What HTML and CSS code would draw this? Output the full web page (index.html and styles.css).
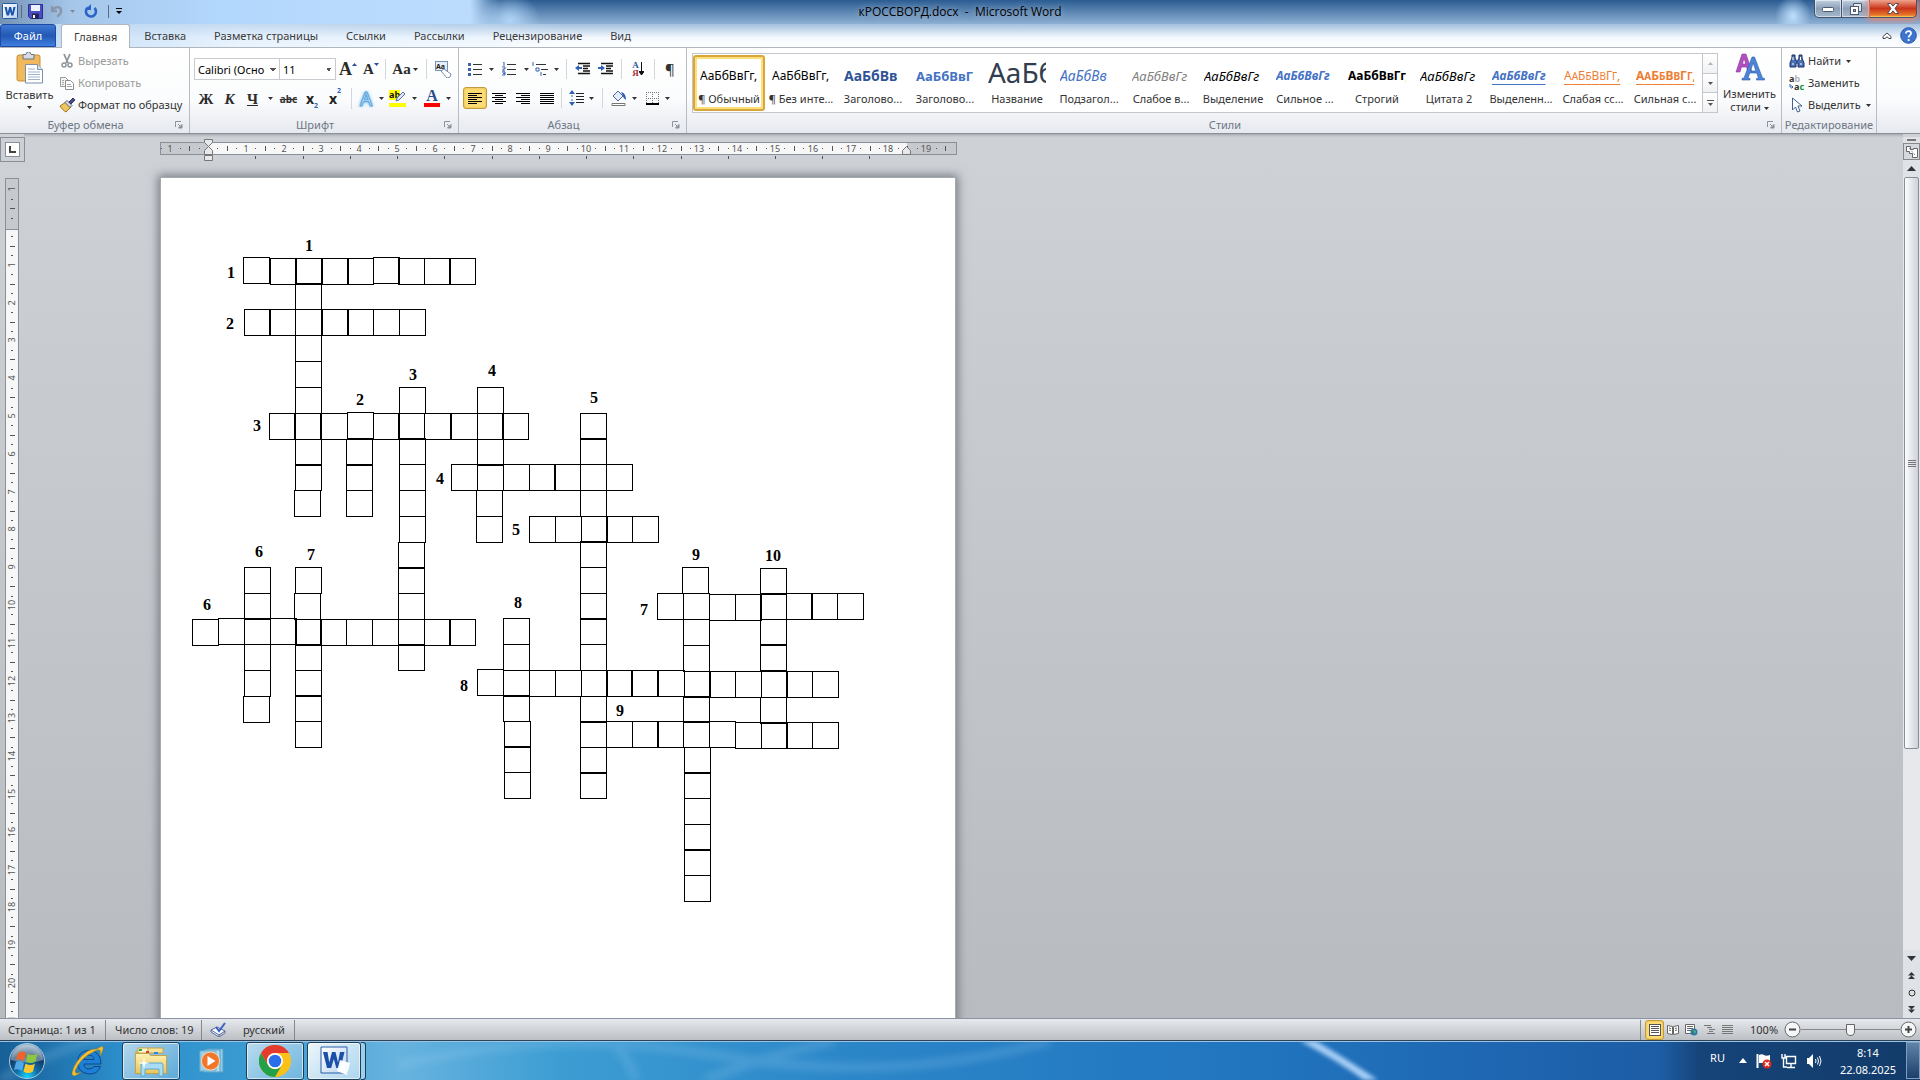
FILE: index.html
```html
<!DOCTYPE html>
<html lang="ru">
<head>
<meta charset="utf-8">
<title>кРОССВОРД.docx - Microsoft Word</title>
<link rel="stylesheet" href="styles.css">
</head>
<body>
<svg class="defs" aria-hidden="true">
  <defs>
    <linearGradient id="gFolder" x1="0" y1="0" x2="0" y2="1"><stop offset="0" stop-color="#fdf3b4"/><stop offset="1" stop-color="#e9c45c"/></linearGradient>
    <radialGradient id="gOrb" cx=".5" cy=".95" r=".9"><stop offset="0" stop-color="#19d3ff"/><stop offset=".35" stop-color="#0f6fa8"/><stop offset=".7" stop-color="#123a63"/><stop offset="1" stop-color="#8fb0c8"/></radialGradient>
    <linearGradient id="gW" x1="0" y1="0" x2="1" y2="1"><stop offset="0" stop-color="#fff"/><stop offset="1" stop-color="#b9d3f0"/></linearGradient>
    <symbol id="caret" viewBox="0 0 5 3"><path d="M0 0h5L2.500 3z" fill="currentColor"/></symbol>
    <symbol id="launch" viewBox="0 0 8 8"><path d="M.5 6V.5H6" fill="none" stroke="#8a929c"/><path d="M3 3l3 3M7 3.500V7H3.500z" stroke="#8a929c" fill="#8a929c"/></symbol>
    <symbol id="word" viewBox="0 0 16 16"><rect x=".5" y=".5" width="15" height="15" rx="1" fill="url(#gW)" stroke="#24589f"/><path d="M2.500 4h2.300l1 5.200L7.200 4h1.900l1.300 5.200 1-5.200h2.200l-2.200 8.500H9.200L8.100 8.200 7 12.500H4.700z" fill="#1b56ae"/></symbol>
    <symbol id="al" viewBox="0 0 14 12"><path d="M0 1.500h14M0 3.500h9M0 5.500h14M0 7.500h9M0 9.500h14M0 11.500h9" stroke="#000"/></symbol>
    <symbol id="ac" viewBox="0 0 14 12"><path d="M0 1.500h14M3 3.500h8M0 5.500h14M3 7.500h8M0 9.500h14M3 11.500h8" stroke="#000"/></symbol>
    <symbol id="ar" viewBox="0 0 14 12"><path d="M0 1.500h14M5 3.500h9M0 5.500h14M5 7.500h9M0 9.500h14M5 11.500h9" stroke="#000"/></symbol>
    <symbol id="aj" viewBox="0 0 14 12"><path d="M0 1.500h14M0 3.500h14M0 5.500h14M0 7.500h14M0 9.500h14M0 11.500h14" stroke="#000"/></symbol>
  </defs>
</svg>

<header class="titlebar">
  <div class="qat">
    <svg width="16" height="16"><use href="#word"/></svg>
    <i class="qsep"></i>
    <button aria-label="Сохранить"><svg width="15" height="15" viewBox="0 0 15 15"><path d="M.5 .5h14v14h-12l-2-2z" fill="#4a4fc4" stroke="#2b2f93"/><path d="M3 1h9v6H3z" fill="#eef1ff"/><path d="M4 9.500h7V15H4z" fill="#23265e"/><path d="M5 11h2v3H5z" fill="#fff"/></svg></button>
    <button aria-label="Отменить"><svg width="14" height="14" viewBox="0 0 14 14"><path d="M2 2v5h5M2.500 6.500C5 2 11 2 11 6.500c0 3-2 5-4 6" fill="none" stroke="#8996ab" stroke-width="2.400"/></svg></button>
    <svg class="qcaret" width="5" height="3"><use href="#caret"/></svg>
    <button aria-label="Повторить"><svg width="14" height="14" viewBox="0 0 14 14"><path d="M4 3.500A5 5 0 1 0 10.500 4" fill="none" stroke="#2a63c8" stroke-width="2.600"/><path d="M7 0v6H1z" fill="#2a63c8"/></svg></button>
    <i class="qsep"></i>
    <button aria-label="Настройка панели"><svg width="8" height="8" viewBox="0 0 8 8"><path d="M1 1.500h6" stroke="#000"/><path d="M1 4h6L4 7z" fill="#000"/></svg></button>
  </div>
  <h1>кРОССВОРД.docx&nbsp; -&nbsp; Microsoft Word</h1>
  <div class="winbtns">
    <button aria-label="Свернуть"><svg width="12" height="6" viewBox="0 0 12 6"><rect x=".5" y="1.500" width="11" height="4" rx="1" fill="#fff" stroke="#4d5a6e"/></svg></button>
    <button aria-label="Восстановить"><svg width="12" height="12" viewBox="0 0 12 12"><path d="M3.500 3V.5h8v8H9" fill="#dfe6ee" stroke="#4d5a6e"/><rect x=".5" y="3.500" width="8" height="8" fill="#fff" stroke="#4d5a6e"/><rect x="3.500" y="6.500" width="2" height="2" fill="#a9b8ca" stroke="#4d5a6e"/></svg></button>
    <button class="close" aria-label="Закрыть"><svg width="12" height="11" viewBox="0 0 12 11"><path d="M.5 .5h3.300L6 3.200 8.200.5h3.300L8 5.500l3.500 5H8.200L6 7.800 3.800 10.500H.5L4 5.500z" fill="#fff" stroke="#5c4a55"/></svg></button>
  </div>
</header>

<nav class="tabs">
  <button class="file">Файл</button>
  <button class="tab on">Главная</button>
  <button class="tab">Вставка</button>
  <button class="tab">Разметка страницы</button>
  <button class="tab">Ссылки</button>
  <button class="tab">Рассылки</button>
  <button class="tab">Рецензирование</button>
  <button class="tab">Вид</button>
  <span class="tabtools">
    <button aria-label="Свернуть ленту"><svg width="10" height="8" viewBox="0 0 10 8"><path d="M1 4.500L5 1l4 3.500v2H7L5 4.800 3 6.500H1z" fill="#fff" stroke="#444"/></svg></button>
    <button aria-label="Справка"><svg width="17" height="17" viewBox="0 0 17 17"><circle cx="8.500" cy="8.500" r="7.800" fill="#3e74cf" stroke="#2a57a6"/><path d="M6 6.500C6 3.200 11 3.400 11 6.400 11 8.300 8.600 8.200 8.600 10.500M8.600 12v2" fill="none" stroke="#fff" stroke-width="1.800"/></svg></button>
  </span>
</nav>

<section class="ribbon">
  <div class="group clip">
    <div class="body">
      <button class="paste"><svg width="28" height="32" viewBox="0 0 28 32"><rect x="1" y="3" width="23" height="26" rx="2" fill="#efb95c" stroke="#c98f35"/><path d="M7 2.500h3a2.500 2.500 0 0 1 5 0h3V7H7z" fill="#d8dce2" stroke="#6d7580"/><path d="M9.500 12.500h12l5 5V31h-17z" fill="#fff" stroke="#7d90ab"/><path d="M21.500 12.500v5h5" fill="#dbe6f3" stroke="#7d90ab"/><path d="M12 17h7M12 20h12M12 22.500h12M12 25h12M12 27.500h12" stroke="#9fb3cf"/></svg><span>Вставить</span><svg width="5" height="3"><use href="#caret"/></svg></button>
      <div class="col">
        <button class="dim"><svg width="16" height="16" viewBox="0 0 16 16"><path d="M5 1l4 9M11 1L7 10" stroke="#8f959c" stroke-width="1.800"/><circle cx="5" cy="12" r="2" fill="none" stroke="#8f959c" stroke-width="1.500"/><circle cx="11" cy="12" r="2" fill="none" stroke="#8f959c" stroke-width="1.500"/></svg>Вырезать</button>
        <button class="dim"><svg width="16" height="16" viewBox="0 0 16 16"><path d="M1.500 2.500h5l3 3v6h-8z" fill="#f5f5f5" stroke="#9a9a9a"/><path d="M6.500 5.500h5l3 3v6h-8z" fill="#fff" stroke="#8d8d8d"/><path d="M8 9.500h4M8 11.500h5M3 5.500h2M3 7.500h2M3 9.500h2" stroke="#a5a5a5"/></svg>Копировать</button>
        <button><svg width="16" height="16" viewBox="0 0 16 16"><path d="M1 9l6-4 5 5-5 5c-2-1-5-4-6-6z" fill="#efc659" stroke="#9c7423"/><path d="M6 5.500L8 3.500l5 5-2 2z" fill="#d9dce6" stroke="#555a77"/><path d="M10 5l4-4 2 2-4 4z" fill="#4a4d86" stroke="#33366a"/></svg>Формат по образцу</button>
      </div>
    </div>
    <footer>Буфер обмена<svg class="la" width="8" height="8"><use href="#launch"/></svg></footer>
  </div>

  <div class="group font">
    <div class="body rows">
      <div class="tr f1">
        <select aria-label="Шрифт"><option>Calibri (Осно</option></select>
        <select aria-label="Размер"><option>11</option></select>
        <button class="serif big">A<svg class="up" width="5" height="3" viewBox="0 0 5 3"><path d="M0 3h5L2.500 0z" fill="#2c4fa0"/></svg></button>
        <button class="serif">A<svg class="up" width="5" height="3" viewBox="0 0 5 3"><path d="M0 0h5L2.500 3z" fill="#2c4fa0"/></svg></button>
        <i class="sep"></i>
        <button class="serif mid">Aa<svg width="5" height="3"><use href="#caret"/></svg></button>
        <i class="sep"></i>
        <button aria-label="Очистить формат"><svg width="17" height="17" viewBox="0 0 17 17"><rect x=".5" y=".5" width="12" height="9" fill="#e8eef8" stroke="#7a8fb5"/><text x="1" y="8" class="tiny">Aa</text><path d="M6 10l3-2 7 5-1 3-3 1z" fill="#fff" stroke="#7a8fb5"/></svg></button>
      </div>
      <div class="tr f2">
        <button class="serif b">Ж</button><button class="serif b i">К</button><button class="serif b u">Ч</button>
        <button aria-label="Подчёркивание"><svg width="5" height="3"><use href="#caret"/></svg></button>
        <button class="strike">abc</button>
        <button class="xb">x<sub>2</sub></button><button class="xb">x<sup>2</sup></button>
        <i class="sep"></i>
        <button class="glow">A</button><button aria-label="Эффекты"><svg width="5" height="3"><use href="#caret"/></svg></button>
        <button aria-label="Выделение"><svg width="17" height="17" viewBox="0 0 17 17"><path d="M0 0h11v10H0zM0 13h17v4H0z" fill="#ff0"/><text x="0" y="8" class="tiny2">ab</text><path d="M7 11l1-3 6-6 2 2-6 6z" fill="#dfe6f5" stroke="#5a6fa5"/></svg></button><button aria-label="Цвет выделения"><svg width="5" height="3"><use href="#caret"/></svg></button>
        <button class="serif colorA">A</button><button aria-label="Цвет текста"><svg width="5" height="3"><use href="#caret"/></svg></button>
      </div>
    </div>
    <footer>Шрифт<svg class="la" width="8" height="8"><use href="#launch"/></svg></footer>
  </div>

  <div class="group para">
    <div class="body rows">
      <div class="tr p1">
        <button aria-label="Маркеры"><svg width="14" height="13" viewBox="0 0 14 13"><path d="M0 0h3v3H0zM0 5h3v3H0zM0 10h3v3H0z" fill="#3a62b0"/><path d="M5 1.500h9M5 6.500h9M5 11.500h9" stroke="#333"/></svg></button><button aria-label="Вид маркера"><svg width="5" height="3"><use href="#caret"/></svg></button>
        <button aria-label="Нумерация"><svg width="14" height="14" viewBox="0 0 14 14"><path d="M1 0h1v4M0 5h3v2H1v2h2M0 10h3v3H0M1 11.500h2" stroke="#3a62b0" fill="none"/><path d="M5 2.500h9M5 7.500h9M5 12.500h9" stroke="#333"/></svg></button><button aria-label="Вид номера"><svg width="5" height="3"><use href="#caret"/></svg></button>
        <button aria-label="Многоуровневый список"><svg width="16" height="15" viewBox="0 0 16 15"><path d="M1 0v4M4 6h3v3H4zM9 10v4" stroke="#3a62b0" fill="none"/><path d="M4 2.500h10M9 7.500h7M11 12.500h3" stroke="#333"/></svg></button><button aria-label="Вид списка"><svg width="5" height="3"><use href="#caret"/></svg></button>
        <i class="sep"></i>
        <button aria-label="Уменьшить отступ"><svg width="16" height="14" viewBox="0 0 16 14"><path d="M3 1.500h12M8 4h7M8 6.500h5M8 9h7M3 11.500h12" stroke="#111" stroke-width="1.300"/><path d="M0 6l4-3v2h3v2H4v2z" fill="#2f5fb8"/></svg></button>
        <button aria-label="Увеличить отступ"><svg width="16" height="14" viewBox="0 0 16 14"><path d="M3 1.500h12M8 4h7M8 6.500h5M8 9h7M3 11.500h12" stroke="#111" stroke-width="1.300"/><path d="M7 6L3 3v2H0v2h3v2z" fill="#2f5fb8"/></svg></button>
        <i class="sep"></i>
        <button class="sort"><span><b>А</b><b>Я</b></span><svg width="5" height="14" viewBox="0 0 5 14"><path d="M2.500 0v12M0 9.500L2.500 13 5 9.500z" stroke="#111"/></svg></button>
        <i class="sep"></i>
        <button class="pil">¶</button>
      </div>
      <div class="tr p2">
        <button class="sel" aria-label="По левому краю"><svg width="14" height="12"><use href="#al"/></svg></button>
        <button aria-label="По центру"><svg width="14" height="12"><use href="#ac"/></svg></button>
        <button aria-label="По правому краю"><svg width="14" height="12"><use href="#ar"/></svg></button>
        <button aria-label="По ширине"><svg width="14" height="12"><use href="#aj"/></svg></button>
        <i class="sep"></i>
        <button aria-label="Интервал"><svg width="15" height="16" viewBox="0 0 15 16"><path d="M7 3.500h8M7 6.500h8M7 9.500h8M7 12.500h8" stroke="#222"/><path d="M3 0l3 4H0zM3 16l3-4H0z" fill="#2f5fb8"/><path d="M3 5v6" stroke="#2f5fb8" stroke-dasharray="2 2"/></svg></button><button aria-label="Выбор интервала"><svg width="5" height="3"><use href="#caret"/></svg></button>
        <i class="sep"></i>
        <button aria-label="Заливка"><svg width="16" height="16" viewBox="0 0 16 16"><path d="M2 6l5-5 5 5-5 5z" fill="#e3ebf7" stroke="#4a689c"/><path d="M10 2c4 1 5 4 5 8-2-1-3-3-3-4z" fill="#2f5fb8"/><path d="M1 13.500h13v2H1z" fill="#fff" stroke="#777"/></svg></button><button aria-label="Цвет заливки"><svg width="5" height="3"><use href="#caret"/></svg></button>
        <button aria-label="Границы"><svg width="13" height="13" viewBox="0 0 13 13"><path d="M.5 0v12M6.500 0v12M12.500 0v12M0 .5h13M0 6.500h13" stroke="#777" stroke-dasharray="1 1"/><path d="M0 12h13" stroke="#000" stroke-width="2"/></svg></button><button aria-label="Вид границы"><svg width="5" height="3"><use href="#caret"/></svg></button>
      </div>
    </div>
    <footer>Абзац<svg class="la" width="8" height="8"><use href="#launch"/></svg></footer>
  </div>

  <div class="group styles">
    <div class="body">
      <div class="gallery">
        <button class="st on"><span>АаБбВвГг,</span><em>¶ Обычный</em></button>
        <button class="st"><span>АаБбВвГг,</span><em>¶ Без инте...</em></button>
        <button class="st"><span class="h1">АаБбВв</span><em>Заголово...</em></button>
        <button class="st"><span class="h2">АаБбВвГ</span><em>Заголово...</em></button>
        <button class="st"><span class="ttl">АаБб</span><em>Название</em></button>
        <button class="st"><span class="subt">АаБбВв</span><em>Подзагол...</em></button>
        <button class="st"><span class="weak">АаБбВвГг</span><em>Слабое в...</em></button>
        <button class="st"><span class="it">АаБбВвГг</span><em>Выделение</em></button>
        <button class="st"><span class="strong">АаБбВвГг</span><em>Сильное ...</em></button>
        <button class="st"><span class="bold">АаБбВвГг,</span><em>Строгий</em></button>
        <button class="st"><span class="it">АаБбВвГг</span><em>Цитата 2</em></button>
        <button class="st"><span class="strong ul">АаБбВвГг</span><em>Выделенн...</em></button>
        <button class="st"><span class="ref">А<small>А</small>Б<small>Б</small>В<small>В</small>Г<small>Г</small>,</span><em>Слабая сс...</em></button>
        <button class="st"><span class="ref bold">А<small>А</small>Б<small>Б</small>В<small>В</small>Г<small>Г</small>,</span><em>Сильная с...</em></button>
        <div class="gbtn">
          <button aria-label="Вверх" disabled><svg width="5" height="3" viewBox="0 0 5 3"><path d="M0 3h5L2.500 0z" fill="#b0b4ba"/></svg></button>
          <button aria-label="Вниз"><svg width="5" height="3"><use href="#caret"/></svg></button>
          <button aria-label="Все стили"><svg width="7" height="6" viewBox="0 0 7 6"><path d="M0 .5h7" stroke="#555"/><path d="M1 3h5L3.500 6z" fill="#555"/></svg></button>
        </div>
      </div>
      <button class="change"><svg width="30" height="28" viewBox="0 0 30 28"><path d="M1 19L7 1h4l6 18h-4l-1.500-5h-5L5 19zM7.500 11h3.200L9 5z" fill="#b24fc0" stroke="#8c379b" stroke-width=".6"/><path d="M7 27v-1.500l2-.5L17 4h2.500l8 21 2 .5V27h-8v-1.500l2-.5-1.800-5h-7l-1.700 5 2 .5V27zM15.400 18h5.500l-2.700-8z" fill="#4c85d8" stroke="#2b5ca8" stroke-width=".6"/></svg><span>Изменить<br>стили <svg width="5" height="3"><use href="#caret"/></svg></span></button>
    </div>
    <footer>Стили<svg class="la" width="8" height="8"><use href="#launch"/></svg></footer>
  </div>

  <div class="group edit">
    <div class="body">
      <div class="col">
        <button><svg width="16" height="14" viewBox="0 0 16 14"><path d="M3 1h3v3l1 2v1h2V6l1-2V1h3v3l2 5v4H9V9H7v4H1V9l2-5z" fill="#4a72b8" stroke="#1c2f63"/><path d="M3 10h2M11 10h2M4 3v3M11.500 3v3" stroke="#fff"/></svg>Найти <svg class="cr" width="5" height="3"><use href="#caret"/></svg></button>
        <button><svg width="16" height="16" viewBox="0 0 16 16"><text x="0" y="7" class="rep">a<tspan class="g">b</tspan></text><text x="5" y="15" class="rep">a<tspan class="gr">c</tspan></text><path d="M1 9v3h3M2.500 10.500L4 12l-1.500 1.500" fill="none" stroke="#2f5fb8"/></svg>Заменить</button>
        <button><svg width="16" height="16" viewBox="0 0 16 16"><path d="M3.500 1v12l3-3 2 5 2.500-1-2-5h4z" fill="#fff" stroke="#41628f"/></svg>Выделить <svg class="cr" width="5" height="3"><use href="#caret"/></svg></button>
      </div>
    </div>
    <footer>Редактирование</footer>
  </div>
</section>

<main class="work">
  <div class="corner"><button aria-label="Табуляция"><svg width="7" height="7" viewBox="0 0 7 7"><path d="M1 0v6h6" fill="none" stroke="#444" stroke-width="2"/></svg></button></div>
  <div class="hrule"><svg id="hr" width="800" height="24" viewBox="160 139 800 24"></svg></div>
  <div class="vrule"><svg id="vr" width="15" height="860" viewBox="5 177 15 860"></svg></div>
  <div class="canvas">
    <article class="page">
      <svg class="cross" viewBox="161 178 794 860" width="794" height="860"><g id="cells" fill="none" stroke="#000" stroke-width="1" shape-rendering="crispEdges"></g><g id="nums"></g></svg>
    </article>
  </div>
  <div class="vscroll">
    <i class="split"></i>
    <button class="rb" aria-label="Линейка"><svg width="12" height="12" viewBox="0 0 12 12"><path d="M.5 .5h4v3h3v-1h4v9h-5v-4h-3v-2h-3z" fill="#fff" stroke="#666"/><path d="M3 2l6 7" stroke="#666" stroke-dasharray="1 1"/></svg></button>
    <button aria-label="Вверх"><svg width="9" height="5" viewBox="0 0 9 5"><path d="M0 5h9L4.500 0z" fill="#333"/></svg></button>
    <div class="track"><div class="thumb"><svg width="8" height="7" viewBox="0 0 8 7"><path d="M0 .5h8M0 2.500h8M0 4.500h8M0 6.500h8" stroke="#777"/></svg></div></div>
    <button aria-label="Вниз"><svg width="9" height="5" viewBox="0 0 9 5"><path d="M0 0h9L4.500 5z" fill="#333"/></svg></button>
    <button aria-label="Предыдущая страница"><svg width="7" height="7" viewBox="0 0 7 7"><path d="M0 3.500h7L3.500 0zM0 7h7L3.500 3.500z" fill="#333"/></svg></button>
    <button aria-label="Объект перехода"><svg width="8" height="8" viewBox="0 0 8 8"><circle cx="4" cy="4" r="3" fill="#ddd" stroke="#333"/></svg></button>
    <button aria-label="Следующая страница"><svg width="7" height="7" viewBox="0 0 7 7"><path d="M0 0h7L3.500 3.500zM0 3.500h7L3.500 7z" fill="#333"/></svg></button>
  </div>
</main>

<footer class="status">
  <span class="s1">Страница: 1 из 1</span><span class="s2">Число слов: 19</span>
  <span class="s3"><svg width="17" height="15" viewBox="0 0 17 15"><path d="M1 8l6-3 8 4-6 4zM1 8v2l8 5v-2M15 9v2l-6 4" fill="#f5f8ff" stroke="#56699b"/><path d="M6 5l3 4 6-8" fill="none" stroke="#3b63c4" stroke-width="2"/></svg>русский</span>
  <div class="views">
    <button class="sel" aria-label="Разметка страницы"><svg width="12" height="12" viewBox="0 0 12 12"><rect x=".5" y=".5" width="11" height="11" fill="#fff" stroke="#555"/><path d="M2 2.500h8M2 4.500h8M2 6.500h8M2 8.500h8" stroke="#555"/></svg></button>
    <button aria-label="Чтение"><svg width="12" height="12" viewBox="0 0 12 12"><path d="M.5 1.500l5 1v8l-5-1zM11.500 1.500l-5 1v8l5-1z" fill="#fff" stroke="#666"/><path d="M2 4l2 .5M2 6l2 .5M8 4.500l2-.5M8 6.500l2-.5" stroke="#666"/></svg></button>
    <button aria-label="Веб"><svg width="13" height="12" viewBox="0 0 13 12"><path d="M.5 .5h9v9h-9z" fill="#fff" stroke="#666"/><path d="M2 2.500h6M2 4.500h6M2 6.500h4" stroke="#666"/><circle cx="9" cy="8" r="3.500" fill="#2a7aa8"/><path d="M8 6l3 1-1 3z" fill="#5cb85c"/></svg></button>
    <button aria-label="Структура"><svg width="11" height="10" viewBox="0 0 11 10"><path d="M0 .5h7M3 2.500h5M5 4.500h6M5 6.500h4M3 8.500h8" stroke="#777"/></svg></button>
    <button aria-label="Черновик"><svg width="11" height="10" viewBox="0 0 11 10"><path d="M0 .5h11M0 2.500h11M0 4.500h11M0 6.500h11M0 8.500h11" stroke="#777"/></svg></button>
  </div>
  <span class="pct">100%</span>
  <button class="zb" aria-label="Уменьшить"><svg width="17" height="17" viewBox="0 0 17 17"><circle cx="8.500" cy="8.500" r="7.500" fill="#f4f6f8" stroke="#666"/><path d="M5 8.500h7" stroke="#444" stroke-width="2"/></svg></button>
  <input type="range" min="0" max="200" value="100" aria-label="Масштаб">
  <button class="zb" aria-label="Увеличить"><svg width="17" height="17" viewBox="0 0 17 17"><circle cx="8.500" cy="8.500" r="7.500" fill="#f4f6f8" stroke="#666"/><path d="M5 8.500h7M8.500 5v7" stroke="#444" stroke-width="2"/></svg></button>
</footer>

<div class="taskbar">
  <svg class="wall" viewBox="0 0 1920 40" preserveAspectRatio="none" aria-hidden="true"><path class="beam" d="M1300 0h16q30 18 62 40h-14q-30-22-64-40z" fill="#a9d0f6"/><path class="soft" d="M835 0q-70 15-130 40M400 25q150-40 320-10T1050 0M612 0q18 20 24 40M0 40Q70 0 130-10" fill="none" stroke="#9fd4f5" stroke-opacity=".2" stroke-width="10"/></svg>
  <button class="tb orb" aria-label="Пуск"><svg width="38" height="38" viewBox="0 0 38 38"><circle cx="19" cy="19" r="17.500" fill="url(#gOrb)" stroke="#a9c9dc"/><path d="M3 18a16 15 0 0 1 32 0q-16 5-32 0z" fill="#fff" opacity=".35"/><path d="M10 11q4-3 8 0l-2 8q-4-3-8-1z" fill="#f0642c"/><path d="M19.500 11.500q5 3 10 0l-2 8q-5 3-9.500 0z" fill="#8dc63f"/><path d="M8 20q4-2 8 1l-2 8q-4-3-8-1z" fill="#4fa8e8"/><path d="M17.500 21.500q5 3 9.500 0l-2 8q-5 3-9.500 0z" fill="#fcc631"/></svg></button>
  <button class="tb ie" aria-label="Internet Explorer"><svg width="36" height="34" viewBox="0 0 36 34"><path d="M31 20H14q0 5 5 5 3.500 0 5-2.500h6.500q-3 8-11.500 7.500Q8 29 7.500 18 8 7 19 6.500 31 7 31 20zM14 15.500h10q-.5-4.500-5-4.500t-5 4.500z" fill="#1d7fd6" stroke="#0d4a8c"/><path d="M27 5q7-5 6 0-1 4-3 7 1-4 0-6-2-1-7 2Q10 14 5 27q0 4 6 1Q2 35 2 29 5 16 18 7q4-2 9-2z" fill="#f7c02e" stroke="#b98310" stroke-width=".5"/></svg></button>
  <button class="tb run" aria-label="Проводник"><svg width="34" height="32" viewBox="0 0 34 32"><path d="M2 6h9l2-3h16v5H2z" fill="#f5e29a" stroke="#c6a347"/><path d="M4 3h10v5H4z" fill="#fff7cf" stroke="#c6a347"/><path d="M5 4h3v2H5z" fill="#2eaa3b"/><path d="M12 6h3v2h-3z" fill="#d4442f"/><path d="M20 7h4v2h-4z" fill="#2f85d8"/><path d="M1.500 8.500h13l2 2h16v18h-31z" fill="url(#gFolder)" stroke="#c6a347"/><path d="M7 31V20q0-2 2-2h18q2 0 2 2v11h-4v-7H11v7z" fill="#a9dcf2" stroke="#5ca8cf"/><path d="M10 12l1 5 5 1-5 1-1 5-1-5-5-1 5-1z" fill="#fff"/></svg></button>
  <button class="tb wmp" aria-label="Проигрыватель"><svg width="28" height="26" viewBox="0 0 28 26"><path d="M8 1h16v23H8z" fill="#8fcdea" stroke="#5b9fc4"/><path d="M5 2h16v22H5z" fill="#b2def2" stroke="#5b9fc4"/><path d="M1 3h16v20H1z" fill="#9bcfe8" stroke="#6fb0d3"/><circle cx="11.500" cy="13" r="9" fill="#f0772a" stroke="#fbd3ae"/><path d="M8.500 8l8 5-8 5z" fill="#fff"/></svg></button>
  <button class="tb run" aria-label="Chrome"><svg width="32" height="32" viewBox="0 0 32 32"><circle cx="16" cy="16" r="16" fill="#fbc116"/><path d="M2.100 8A16 16 0 0 0 16 32l7-12a8 8 0 0 1-14 0z" fill="#24a148"/><path d="M2.100 8A16 16 0 0 1 29.900 8H16a8 8 0 0 0-7 12z" fill="#e33b2e"/><circle cx="16" cy="16" r="8" fill="#fff"/><circle cx="16" cy="16" r="6.300" fill="#2a6fe8"/></svg></button>
  <button class="tb run active" aria-label="Word"><svg width="32" height="30" viewBox="0 0 32 30"><path d="M3 1h26v26H3z" fill="url(#gW)" stroke="#2a5da8"/><path d="M5 6h4.500l1.800 10.500L14 6h3.500l2.500 10.500L22 6h4.500L22.500 22h-4.200l-2.500-9-2.600 9H9z" fill="#1a50a8"/><path d="M22 14l10 3-3 12-10-4z" fill="#fff" opacity=".95"/></svg></button>
  <i class="stack"></i>
  <div class="tray">
    <span class="lang">RU</span>
    <svg width="8" height="5" viewBox="0 0 8 5"><path d="M0 5h8L4 0z" fill="#fff"/></svg>
    <svg width="16" height="16" viewBox="0 0 16 16"><path d="M1.500 1v14" stroke="#fff" stroke-width="2"/><path d="M3 2q3-1.500 5 0t6 0v8H3z" fill="#fff"/><circle cx="11" cy="11" r="4.500" fill="#dc2a1c"/><path d="M9 9l4 4M13 9l-4 4" stroke="#fff" stroke-width="1.500"/></svg>
    <svg width="16" height="16" viewBox="0 0 16 16"><path d="M5.500 3.500h9v7h-9zM10 11v3M6 14.500h8M1 1v4h3V1M2.500 5v9H6" fill="none" stroke="#fff" stroke-width="1.400"/></svg>
    <svg width="16" height="16" viewBox="0 0 16 16"><path d="M1 5h2l4-4v14l-4-4H1z" fill="#fff"/><path d="M9.500 6q1 2 0 4M11.500 4.500q2 3.500 0 7M13.500 3q3 5 0 10" fill="none" stroke="#fff"/></svg>
    <time><span>8:14</span><span>22.08.2025</span></time>
    <button class="desk" aria-label="Свернуть все окна"></button>
  </div>
</div>
<script src="app.js"></script>
</body>
</html>
```
FILE: styles.css
```css
* { box-sizing: border-box; }
body { margin: 0; height: 100vh; display: flex; flex-direction: column; overflow: hidden; font: 11px/16px "Noto Sans", "Open Sans", sans-serif; color: #333; background: #fff; }
button { font: inherit; color: inherit; background: none; border: 0; padding: 0; display: flex; align-items: center; justify-content: center; }
svg { flex: none; }
.defs { position: absolute; width: 0; height: 0; }

.titlebar { height: 24px; display: flex; justify-content: space-between; background: radial-gradient(ellipse 30px 26px at 510px 20px, rgba(180,217,252,.9), rgba(180,217,252,0)), radial-gradient(ellipse 18px 20px at 1793px 16px, rgba(190,224,255,1), rgba(190,224,255,0)), linear-gradient(90deg, #7392b4 0, #a5c6e9 70px, #b3d8fd 220px, #bcdcfd 470px, rgba(188,220,253,0) 500px), linear-gradient(#2b5c92, #8db0d3); }
.qat { display: flex; align-items: center; padding: 0 2px 2px; color: #222; width: 300px; }
.qsep { width: 1px; height: 13px; background: #667; margin: 0 6px 0 3px; }
.qat button { margin-right: 7px; }
.qcaret { margin: 0 9px 0 -1px; color: #7d8798; }
.titlebar h1 { margin: 0; font: 12px/16px "Open Sans", sans-serif; color: #000; padding-top: 4px; text-shadow: 0 0 6px rgba(255,255,255,.5); }
.winbtns { width: 300px; display: flex; justify-content: flex-end; padding-right: 3px; }
.winbtns button { width: 28px; height: 18px; border: 1px solid #42536b; border-top: 0; border-left-width: 0; background: linear-gradient(#c3d2e2, #8b9fb7 50%, #a5b8cb); box-shadow: inset 0 0 0 1px rgba(255,255,255,.5); }
.winbtns button:first-child { border-left-width: 1px; border-radius: 0 0 0 5px; }
.winbtns .close { width: 47px; border-radius: 0 0 5px 0; background: linear-gradient(#f0a38c, #c9341a 50%, #e9792b 90%, #f8dc5a); box-shadow: 0 0 6px 2px #f4846c; }

.tabs { height: 24px; display: flex; background: linear-gradient(90deg, #bcd9f6 0, rgba(220,236,252,.6) 240px, rgba(220,236,252,.3) 490px, rgba(255,255,255,0) 560px), linear-gradient(#a3c0de, #f4f9fe 60%, #fff); border-bottom: 1px solid #b0b6bd; color: #3b3b3b; }
.file { width: 56px; border-radius: 3px 3px 0 0; border: 1px solid #1f48a0; background: linear-gradient(#3e7ad4, #2358b4 50%, #3f7ee0); margin-right: 5px; }
.tabs .file { color: #fff; }
.tab { padding: 0 14px; }
.tab.on { background: #fff; border: 1px solid #b0b6bd; border-bottom: 0; border-radius: 3px 3px 0 0; margin-bottom: -1px; padding: 0 12px; }
.tabtools { margin-left: auto; display: flex; gap: 8px; padding-right: 3px; }

.ribbon { height: 86px; display: flex; background: linear-gradient(#fff, #fbfcfd 60%, #e6e9ef); border-bottom: 1px solid #8b9097; }
.group { display: flex; flex-direction: column; border-right: 1px solid #b8bcc4; }
.group .body { display: flex; height: 69px; }
.group > footer { color: #6d7684; text-align: center; height: 16px; line-height: 16px; position: relative; white-space: nowrap; padding-right: 18px; }
.la { position: absolute; right: 6px; top: 4px; }
.clip { width: 190px; }
.font { width: 269px; }
.para { width: 228px; }
.styles { width: 1095px; }
.edit { width: 95px; }
.group.edit > footer { padding: 0; }
.paste { width: 59px; flex-direction: column; justify-content: flex-start; padding-top: 4px; gap: 3px; color: #333; }
.col { display: flex; flex-direction: column; padding-top: 2px; }
.col button { height: 22px; justify-content: flex-start; gap: 3px; white-space: nowrap; }
.cr { margin-left: 2px; }
.clip .dim { color: #9a9a9a; }
.rows { flex-direction: column; padding: 10px 0 0 4px; gap: 7px; }
.tr { display: grid; height: 22px; align-items: stretch; color: #333; }
.f1 { grid-template-columns: 86px 56px 24px 22px 6px 34px 8px 26px; }
.f2 { grid-template-columns: 24px 23px 23px 12px 25px 22px 24px 8px 22px 8px 24px 10px 26px 6px; }
.p1 { grid-template-columns: 24px 8px 28px 6px 22px 10px 10px 24px 22px 8px 26px 6px 26px; }
.p2 { grid-template-columns: 24px 24px 24px 24px 5px 24px 6px 16px 18px 12px 24px 6px; }
.sep { width: 1px; background: #d3d6da; margin: 1px auto; }
select { font: 11px "Noto Sans", sans-serif; border: 1px solid #c8cbd0; padding: 0 0 0 3px; appearance: none; height: 22px; color: #000; border-radius: 0; min-width: 0; background: #fff no-repeat; background-image: linear-gradient(45deg, transparent 50%, #555 50%), linear-gradient(-45deg, transparent 50%, #555 50%); background-size: 3px 3px, 3px 3px; background-position: right 6px center, right 3px center; }
select + select { margin-left: -1px; }
.serif { font: 700 15px/20px "Liberation Serif", serif; color: #2b2b2b; }
.serif.big { font-size: 18px; }
.serif .up { align-self: flex-start; margin-top: 5px; }
.serif.mid { gap: 2px; }
.serif.i { font-style: italic; }
.serif.u { text-decoration: underline; }
.strike { font-weight: 700; font-size: 10px; text-decoration: line-through; }
.xb { font-weight: 700; font-size: 14px; color: #222; }
.xb sub, .xb sup { font-size: 7px; line-height: 8px; color: #2f5fb8; }
.xb sub { align-self: flex-end; } .xb sup { align-self: flex-start; }
.glow { font-size: 19px; color: #fff; text-shadow: 0 0 1px #2f8fd8, 0 0 2px #2f8fd8, 0 0 4px #6bb8ee; -webkit-text-stroke: 1px #5fa9e0; }
.tiny { font: 700 7px "Noto Sans", sans-serif; fill: #222; }
.tiny2 { font: 700 9px "Noto Sans", sans-serif; fill: #111; }
.rep { font: 700 9px "Noto Sans", sans-serif; fill: #333; }
.rep .g { fill: #b5b5b5; } .rep .gr { fill: #17901d; }
.serif.colorA { color: #2d4b8c; font-size: 16px; line-height: 14px; margin: 2px 5px 3px; border-bottom: 4px solid #f00; }
.sort span { display: flex; flex-direction: column; font: 700 9px/8px "Liberation Serif", serif; color: #2c4fa0; }
.sort b + b { color: #a33; }
.pil { font-size: 15px; }
.sel { border: 1px solid #c29b3b; border-radius: 3px; background: #fbdc73; box-shadow: inset 0 0 2px #d9a741; }

.styles .body { padding: 5px 0 0 5px; }
.gallery { display: flex; border: 1px solid #c3c7cd; height: 60px; width: 1026px; background: #fff; }
.st { width: 72px; flex: none; flex-direction: column; padding: 0 6px; justify-content: flex-start; margin: 1px 0; }
.st span { width: 58px; height: 37px; overflow: hidden; white-space: nowrap; text-align: left; font-size: 12px; line-height: 42px; color: #000; }
.st em { font-style: normal; white-space: nowrap; line-height: 14px; }
.st.on { border: 2px solid #d9a63c; border-radius: 3px; box-shadow: inset 0 0 0 2px #fde07a; padding: 0 4px; }
.st.on span { line-height: 38px; height: 35px; }
.st .h1 { font-weight: 700; font-size: 14px; color: #2f5496; }
.st .h2 { font-weight: 700; font-size: 13px; color: #4472c4; }
.st .ttl { font-size: 28px; color: #323e4f; line-height: 34px; }
.st .subt { font-style: italic; font-size: 14px; color: #4472c4; }
.st .weak { font-style: italic; font-size: 13px; color: #808080; }
.st .it { font-style: italic; font-size: 13px; }
.st .strong { font-style: italic; font-weight: 700; color: #4472c4; }
.st .bold { font-weight: 700; }
.st .ul, .st .ref { text-decoration: underline; text-underline-offset: 4px; }
.st .ref { color: #ed7d31; }
.st small { font-size: 10px; }
.gbtn { margin-left: auto; width: 15px; display: flex; flex-direction: column; border-left: 1px solid #c3c7cd; }
.gbtn button { flex: 1; color: #555; background: linear-gradient(#fff, #f0f1f3); }
.gbtn button + button { border-top: 1px solid #c3c7cd; }
.change { flex: 1; flex-direction: column; gap: 6px; justify-content: flex-start; }
.change span { text-align: center; line-height: 13px; }
.change svg { vertical-align: middle; }
.edit .body { padding-left: 7px; }

.work { flex: 1; min-height: 0; display: grid; grid-template: 44px 1fr / 24px 1fr 17px; background: linear-gradient(#ced1d6, #b8bbc0); }
.corner { padding: 3px 0 0; width: 25px; }
.corner button { width: 25px; height: 25px; border: 1px solid #8a9099; background: #cdd0d5; }
.corner svg { box-sizing: content-box; padding: 3px; background: #fff; border: 1px solid #8a9099; }
.hrule { padding: 5px 0 0 136px; overflow: hidden; box-shadow: inset 0 4px 3px -3px #9a9fa6; }
.hrule svg { display: block; }
.vrule { padding-left: 5px; overflow: hidden; min-height: 0; }
.hrule text, .vrule text { font: 9px "Noto Sans", sans-serif; fill: #555; text-anchor: middle; }
.canvas { overflow: hidden; padding: 16px 0 0 136px; margin-top: -16px; min-height: 0; }
.page { width: 796px; height: 1123px; margin-top: -1px; background: #fff; border: 1px solid #a5a9b0; box-shadow: 0 0 9px 2px #777c84; }
.cross { display: block; }
.cross text { font: 700 16px "Liberation Serif", serif; text-anchor: middle; }
.vscroll { grid-column: 3; grid-row: 1 / 3; background: #dfe2e7; display: flex; flex-direction: column; margin-top: 3px; padding-top: 2px; }
.split { height: 2px; background: #777; margin: 0 4px 2px; }
.vscroll button { height: 17px; flex: none; }
.vscroll .rb { border: 1px solid #888; background: #d5d8dd; }
.track { flex: 1; background: #e6e8eb; }
.thumb { height: 74%; border: 1px solid #888f99; border-radius: 2px; margin: 0 1px; background: linear-gradient(90deg, #fdfdfe, #cdd1d9); display: flex; align-items: center; justify-content: center; }

.status { height: 22px; display: flex; align-items: center; border-top: 1px solid #8b93a3; background: linear-gradient(#e6e9ed, #bcc0c4); color: #333; white-space: nowrap; }
.status span { height: 20px; line-height: 20px; }
.s1 { width: 106px; padding-left: 8px; border-right: 1px solid #888; }
.s2 { width: 96px; padding-left: 9px; border-right: 1px solid #888; }
.s3 { width: 93px; padding-left: 8px; border-right: 1px solid #888; display: flex; align-items: center; gap: 16px; }
.views { margin-left: auto; display: flex; border-left: 1px solid #888; padding-left: 4px; height: 20px; }
.views button { width: 18px; }
.views .sel { width: 19px; }
.pct { padding-left: 14px; width: 48px; }
.zb { width: 17px; }
input[type=range] { appearance: none; width: 99px; height: 18px; margin: 0; background: linear-gradient(#888, #888) center / 100% 1px no-repeat; }
input[type=range]::-webkit-slider-thumb { appearance: none; width: 9px; height: 12px; border: 1px solid #666; border-radius: 1px 1px 5px 5px; background: #f4f5f7; }
.status .zb:last-child { margin-right: 3px; }

.taskbar { position: relative; height: 40px; display: flex; align-items: center; border-top: 1px solid #2c4459; box-shadow: inset 0 1px 0 #9cc3e4; background: linear-gradient(90deg, #175f97 0, #2b8ecb 120px, #3a9bd2 250px, #67b3df 400px, #3d9dd3 560px, #2b86c8 850px, #2175bf 1250px, #1e63ae 1550px, #1d5da5 1660px, #164479 1700px, #123b69); overflow: hidden; }
.wall { position: absolute; inset: 0; width: 100%; height: 100%; }
.wall .soft { filter: blur(4px); }
.wall .beam { filter: blur(2px); }
.tb { position: relative; height: 38px; }
.orb { width: 54px; } .ie { width: 68px; } .wmp { width: 66px; }
.run { width: 58px; border: 1px solid #1d3e58; border-radius: 3px; background: linear-gradient(135deg, rgba(255,255,255,.65), rgba(255,255,255,.2)); box-shadow: inset 0 0 0 1px rgba(255,255,255,.6); }
.run.active { width: 54px; margin-left: 3px; background: linear-gradient(135deg, rgba(255,255,255,.9), rgba(255,255,255,.5)); }
.stack { position: relative; width: 5px; height: 38px; border: 1px solid #1d3e58; border-left: 0; border-radius: 0 3px 3px 0; background: rgba(255,255,255,.4); }
.tray { position: relative; margin-left: auto; display: flex; align-items: center; gap: 9px; color: #fff; height: 100%; }
.lang { margin: -6px 5px 0 0; }
.tray time { display: flex; flex-direction: column; align-items: center; width: 74px; line-height: 17px; }
.desk { width: 14px; height: 37px; border: 1px solid #7f9fc0; background: linear-gradient(#5f83a8, #1c3f6b); margin-left: -8px; }
```
FILE: app.js
```js
const NS = 'http://www.w3.org/2000/svg';
function add(parent, tag, attrs, text) {
  const e = document.createElementNS(NS, tag);
  for (const k in attrs) e.setAttribute(k, attrs[k]);
  if (text !== undefined) e.textContent = text;
  parent.appendChild(e);
}

// Crossword cells: [top, left, left, ...]
const rows = [
  [257, 243, 373], [258, 270, 295, 322, 347, 398, 424, 449],
  [309, 244, 269, 295, 322, 347, 373, 399],
  [413, 269, 294, 321, 373, 398, 424, 451, 477, 502], [412, 347],
  [464, 451, 477, 503, 529, 554, 580, 606],
  [516, 529, 555, 581, 606, 632],
  [619, 192, 295, 320, 346, 372, 398, 424, 449], [618, 218, 244, 270],
  [593, 657, 683, 760, 786, 811, 837], [594, 709, 735],
  [669, 477], [670, 503, 529, 555, 581, 606, 631, 658], [671, 684, 709, 735, 761, 786, 812],
  [721, 580, 606, 632, 657, 683, 709], [722, 735, 761, 786, 812]
];
// Crossword cells: [left, top, top, ...]
const cols = [
  [295, 283, 335, 361, 387, 439, 464], [294, 490],
  [346, 439, 464, 490],
  [399, 387, 438, 464, 490, 516], [398, 542, 567, 593, 644],
  [477, 387, 439], [476, 490, 516],
  [580, 413, 438, 490, 541, 567, 593, 618, 644, 696, 747, 772],
  [244, 567, 593, 644, 670], [243, 696],
  [295, 567, 644, 670, 695, 721], [294, 593],
  [503, 618, 644, 695], [504, 721, 746, 772],
  [682, 567], [683, 619, 645, 696], [684, 747, 772, 798, 824, 849, 875],
  [760, 568, 619, 644, 697]
];
const cells = document.getElementById('cells');
const cell = (x, y) => add(cells, 'rect', { x: x + 0.5, y: y + 0.5, width: 26, height: 26 });
rows.forEach(([y, ...xs]) => xs.forEach(x => cell(x, y)));
cols.forEach(([x, ...ys]) => ys.forEach(y => cell(x, y)));

const nums = document.getElementById('nums');
[[1, 231, 278], [2, 230, 329], [3, 257, 431], [4, 440, 484], [5, 516, 535], [6, 207, 610],
 [7, 644, 615], [8, 464, 691], [9, 620, 716], [1, 309, 251], [2, 360, 405], [3, 413, 380],
 [4, 492, 376], [5, 594, 403], [6, 259, 557], [7, 311, 560], [8, 518, 608], [9, 696, 560], [10, 773, 561]
].forEach(([n, x, y]) => add(nums, 'text', { x, y }, n));

// Horizontal ruler, centimetres from the left margin
const cm = 37.8, hr = document.getElementById('hr');
add(hr, 'rect', { x: 160.5, y: 142.5, width: 796, height: 12, fill: '#c6cacf', stroke: '#8a9099' });
add(hr, 'rect', { x: 208, y: 143, width: 699, height: 11, fill: '#f7f7f8' });
for (let q = -5; q <= 79; q++) {
  const x = Math.round(208 + q * cm / 4);
  if (q === 0 || x > 953) continue;
  if (q % 4 === 0) add(hr, 'text', { x, y: 152 }, Math.abs(q / 4));
  else if (q % 2 === 0) add(hr, 'rect', { x, y: 146, width: 1, height: 5, fill: '#555' });
  else add(hr, 'rect', { x, y: 148, width: 1, height: 1, fill: '#555' });
}
for (let i = 1; i < 15; i++) add(hr, 'rect', { x: Math.round(208 + i * cm * 1.25), y: 156, width: 1, height: 3, fill: '#555' });
const mark = { fill: '#e8e8ea', stroke: '#777' };
add(hr, 'path', { d: 'M204.5 139.5h8v3l-4 4-4-4zM204.5 154.5v-4l4-4 4 4v4zM204.5 155.5h8v5h-8z', ...mark });
add(hr, 'path', { d: 'M902.5 154.5v-4l4-4 4 4v4z', ...mark });

// Vertical ruler
const vr = document.getElementById('vr');
add(vr, 'rect', { x: 5.5, y: 177.5, width: 13, height: 900, fill: '#f7f7f8', stroke: '#8a9099' });
add(vr, 'rect', { x: 5.5, y: 177.5, width: 13, height: 51, fill: '#c6cacf', stroke: '#8a9099' });
for (let q = -4; q <= 84; q++) {
  const y = Math.round(226 + q * cm / 4);
  if (q === 0) continue;
  if (q % 4 === 0) add(vr, 'text', { x: 0, y: 0, transform: `translate(15 ${y}) rotate(-90)` }, Math.abs(q / 4));
  else if (q % 2 === 0) add(vr, 'rect', { x: 10, y, width: 5, height: 1, fill: '#555' });
  else add(vr, 'rect', { x: 11, y, width: 2, height: 1, fill: '#555' });
}
```
